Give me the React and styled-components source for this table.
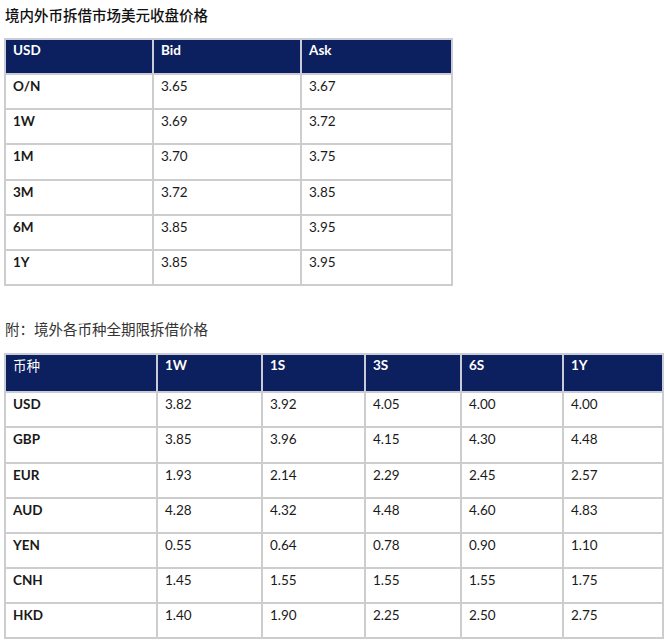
import styled, { createGlobalStyle } from "styled-components";

const GlobalStyle = createGlobalStyle`
    body {
        margin: 0;
        background: #ffffff;
        font-family: "Lato", "Liberation Sans", "Noto Sans CJK SC", sans-serif;
    }
`;

const Page = styled.div`
    padding: 5px 2px 0 4px;
    width: 665px;
    box-sizing: border-box;
`;

const Title = styled.div`
    font-family: "Noto Sans CJK SC", sans-serif;
    font-size: 14.5px;
    line-height: 20px;
    color: ${(p) => (p.$muted ? "#333333" : "#111111")};
    font-weight: ${(p) => (p.$muted ? 400 : 500)};
    margin-left: 1px;
    margin-bottom: ${(p) => p.$gap}px;
`;

const Table = styled.table`
    border-collapse: collapse;
    table-layout: fixed;
    width: ${(p) => p.$width}px;
    margin-bottom: ${(p) => p.$gap}px;
    font-size: 13.5px;
    line-height: 18px;
`;

const HeadCell = styled.th`
    background: #0c1f5e;
    color: #ffffff;
    text-align: left;
    vertical-align: top;
    border: 2px solid #c9ccd6;
    padding: 1px 7px 0;
    height: ${(p) => p.$h}px;
    box-sizing: border-box;
    font-family: ${(p) => (p.$cjk ? '"Noto Sans CJK SC", sans-serif' : "inherit")};
    font-weight: ${(p) => (p.$cjk ? 400 : 700)};
`;

const Cell = styled.td`
    border: 2px solid #cdcdcd;
    padding: 2px 7px 0;
    vertical-align: top;
    color: #1a1a1a;
    height: ${(p) => p.$h}px;
    box-sizing: border-box;
    font-weight: ${(p) => (p.$label ? 700 : 400)};
`;

const usdRows = [
    ["O/N", "3.65", "3.67"],
    ["1W", "3.69", "3.72"],
    ["1M", "3.70", "3.75"],
    ["3M", "3.72", "3.85"],
    ["6M", "3.85", "3.95"],
    ["1Y", "3.85", "3.95"],
];

const allRows = [
    ["USD", "3.82", "3.92", "4.05", "4.00", "4.00"],
    ["GBP", "3.85", "3.96", "4.15", "4.30", "4.48"],
    ["EUR", "1.93", "2.14", "2.29", "2.45", "2.57"],
    ["AUD", "4.28", "4.32", "4.48", "4.60", "4.83"],
    ["YEN", "0.55", "0.64", "0.78", "0.90", "1.10"],
    ["CNH", "1.45", "1.55", "1.55", "1.55", "1.75"],
    ["HKD", "1.40", "1.90", "2.25", "2.50", "2.75"],
];

const cols2 = [152, 105, 103, 96, 102, 100];

const App = () => {
    return (
        <>
            <GlobalStyle />
            <Page>
                <Title $gap={13}>境内外币拆借市场美元收盘价格</Title>
                <Table $width={447} $gap={33}>
                    <colgroup>
                        <col style={{ width: 148 }} />
                        <col style={{ width: 148 }} />
                        <col style={{ width: 151 }} />
                    </colgroup>
                    <thead>
                        <tr>
                            <HeadCell $h={35}>USD</HeadCell>
                            <HeadCell $h={35}>Bid</HeadCell>
                            <HeadCell $h={35}>Ask</HeadCell>
                        </tr>
                    </thead>
                    <tbody>
                        {usdRows.map((r) => (
                            <tr key={r[0]}>
                                <Cell $h={35.2} $label>{r[0]}</Cell>
                                <Cell $h={35.2}>{r[1]}</Cell>
                                <Cell $h={35.2}>{r[2]}</Cell>
                            </tr>
                        ))}
                    </tbody>
                </Table>
                <Title $muted $gap={14}>附：境外各币种全期限拆借价格</Title>
                <Table $width={658} $gap={0}>
                    <colgroup>
                        {cols2.map((w, i) => (
                            <col key={i} style={{ width: w }} />
                        ))}
                    </colgroup>
                    <thead>
                        <tr>
                            <HeadCell $h={38} $cjk>币种</HeadCell>
                            {["1W", "1S", "3S", "6S", "1Y"].map((h) => (
                                <HeadCell key={h} $h={38}>{h}</HeadCell>
                            ))}
                        </tr>
                    </thead>
                    <tbody>
                        {allRows.map((r) => (
                            <tr key={r[0]}>
                                {r.map((v, i) => (
                                    <Cell key={i} $h={35.2} $label={i === 0}>{v}</Cell>
                                ))}
                            </tr>
                        ))}
                    </tbody>
                </Table>
            </Page>
        </>
    );
};

export default App;
